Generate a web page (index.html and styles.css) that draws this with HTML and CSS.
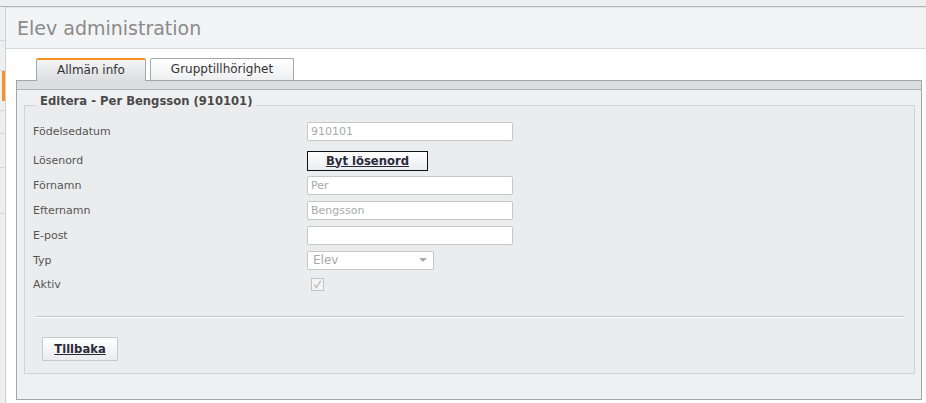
FILE: index.html
```html
<!DOCTYPE html>
<html lang="sv">
<head>
<meta charset="utf-8">
<title>Elev administration</title>
<link rel="stylesheet" href="styles.css">
</head>
<body>
<div class="topbar"></div>
<div class="layout">
  <aside class="side">
    <div class="side-item s1"></div>
    <div class="side-item s2"></div>
    <div class="side-item s3"><div class="side-mark"></div></div>
    <div class="side-item s4"></div>
    <div class="side-item s5"></div>
    <div class="side-item s6"></div>
  </aside>
  <main class="main">
    <header class="head"><h1 class="title">Elev administration</h1></header>
    <div class="content">
      <nav class="tabs">
        <a class="tab active">Allmän info</a>
        <a class="tab">Grupptillhörighet</a>
      </nav>
      <section class="panel">
        <div class="band"></div>
        <div class="panel-body">
          <fieldset class="box">
            <legend class="legend">Editera - Per Bengsson (910101)</legend>
            <div class="row"><label class="lbl">Födelsedatum</label><div class="ctl"><input class="inp" value="910101" readonly></div></div>
            <div class="row row-pw"><label class="lbl">Lösenord</label><div class="ctl"><button class="btn btn-focus" type="button">Byt lösenord</button></div></div>
            <div class="row"><label class="lbl">Förnamn</label><div class="ctl"><input class="inp" value="Per" readonly></div></div>
            <div class="row"><label class="lbl">Efternamn</label><div class="ctl"><input class="inp" value="Bengsson" readonly></div></div>
            <div class="row"><label class="lbl">E-post</label><div class="ctl"><input class="inp" value="" readonly></div></div>
            <div class="row row-s"><label class="lbl">Typ</label><div class="ctl"><div class="select"><span>Elev</span><span class="caret"></span></div></div></div>
            <div class="row row-s"><label class="lbl">Aktiv</label><div class="ctl"><span class="check"><svg width="11" height="11" viewBox="0 0 11 11"><path d="M2.2 5.6 L4.3 8.6 L8.8 1.8" fill="none" stroke="#b9b9b9" stroke-width="1.3"/></svg></span></div></div>
            <div class="sep"></div>
            <button class="btn btn-back" type="button">Tillbaka</button>
          </fieldset>
        </div>
      </section>
    </div>
  </main>
</div>
</body>
</html>
```
FILE: styles.css
```css
html, body {
  margin: 0;
  padding: 0;
  height: 100%;
}
body {
  font-family: "DejaVu Sans", Verdana, sans-serif;
  font-size: 11px;
  color: #555;
  background: #fff;
  display: flex;
  flex-direction: column;
  overflow: hidden;
}
.topbar {
  height: 6px;
  background: #eeeff1;
  border-bottom: 1px solid #b3b4b7;
  flex: none;
}
.layout {
  flex: 1;
  display: flex;
  min-height: 0;
}
.side {
  width: 5px;
  background: #eeeff1;
  border-right: 1px solid #cfd0d2;
  flex: none;
}
.side-item {
  border-bottom: 1px solid #d6d7d9;
  display: flex;
  justify-content: flex-end;
}
.s1 { height: 33px; }
.s2 { height: 29px; }
.s3 { height: 39px; }
.s4 { height: 22px; }
.s5 { height: 33px; }
.s6 { height: 45px; }
.side-mark {
  width: 3px;
  height: 30px;
  background: #f5931e;
}
.main {
  flex: 1;
  display: flex;
  flex-direction: column;
  min-width: 0;
}
.head {
  height: 40px;
  background: #f3f4f6;
  border-top: 1px solid #e3e4e6;
  border-bottom: 1px solid #d6d7d9;
  padding-left: 11px;
  flex: none;
}
.title {
  margin: 0;
  font-size: 19px;
  font-weight: normal;
  line-height: 40px;
  color: #8a8a8a;
}
.content {
  flex: 1;
  display: flex;
  flex-direction: column;
  padding: 9px 4px 3px 10px;
  min-height: 0;
}
.tabs {
  display: flex;
  gap: 4px;
  padding-left: 20px;
  height: 22px;
  flex: none;
}
.tab {
  box-sizing: border-box;
  height: 22px;
  padding: 0 20px;
  border: 1px solid #a6a7aa;
  border-bottom: none;
  border-radius: 2px 2px 0 0;
  background: linear-gradient(#ffffff, #eeeff1);
  font-size: 12px;
  line-height: 21px;
  color: #333;
  text-decoration: none;
}
.tab.active {
  height: 23px;
  margin-bottom: -1px;
  border-top: 2px solid #f5931e;
  line-height: 20px;
  background: linear-gradient(#f5f5f6, #dcdde0);
  position: relative;
  z-index: 1;
}
.panel {
  flex: 1;
  display: flex;
  flex-direction: column;
  border: 1px solid #a3a4a7;
  background: #eff0f2;
  min-height: 0;
}
.band {
  height: 8px;
  background: #dcdde0;
  border-bottom: 1px solid #b2b3b6;
  flex: none;
}
.panel-body {
  flex: 1;
  padding: 4px 6px 0 7px;
}
.box {
  margin: 0;
  border: 1px solid #d2d3d5;
  padding: 3px 8px 12px 8px;
  background: #ebecee;
}
.legend {
  font-weight: bold;
  font-size: 11.6px;
  line-height: 14px;
  color: #4a4a4a;
  padding: 0 4px 8px;
  margin-left: 3px;
}
.row {
  display: grid;
  grid-template-columns: 274px 1fr;
  align-items: center;
  height: 25px;
}
.row-pw {
  margin-top: 4px;
}
.row-s {
  height: 24px;
}
.lbl {
  color: #555;
}
.ctl {
  display: flex;
  align-items: center;
}
.inp {
  box-sizing: border-box;
  width: 206px;
  height: 19px;
  margin: 0;
  padding: 0 3px;
  border: 1px solid #c6c7c9;
  border-radius: 2px;
  background: #fff;
  font-family: "DejaVu Sans", Verdana, sans-serif;
  font-size: 11px;
  color: #a9a9a9;
  outline: none;
}
.btn {
  box-sizing: border-box;
  margin: 0;
  padding: 0;
  font-family: "DejaVu Sans", Verdana, sans-serif;
  font-size: 11.6px;
  font-weight: bold;
  text-decoration: underline;
  color: #2b2b3a;
  background: linear-gradient(#ffffff, #ebecef);
  cursor: pointer;
}
.btn-focus {
  width: 121px;
  height: 20px;
  border: 1px solid #111;
}
.select {
  box-sizing: border-box;
  width: 127px;
  height: 19px;
  border: 1px solid #c6c7c9;
  border-radius: 2px;
  background: #fff;
  display: flex;
  align-items: center;
  justify-content: space-between;
  padding: 0 6px 0 5px;
  font-size: 12px;
  color: #a9a9a9;
}
.caret {
  width: 0;
  height: 0;
  border-left: 4px solid transparent;
  border-right: 4px solid transparent;
  border-top: 4px solid #a9a9a9;
}
.check {
  box-sizing: border-box;
  width: 13px;
  height: 13px;
  margin-left: 4px;
  border: 1px solid #c2c3c5;
  background: #f4f4f5;
  display: flex;
  align-items: center;
  justify-content: center;
}
.sep {
  margin: 20px 2px 0;
  border-top: 1px solid #c6c7c9;
  border-bottom: 1px solid #ffffff;
}
.btn-back {
  display: block;
  width: 76px;
  height: 24px;
  margin: 19px 0 0 9px;
  border: 1px solid #c9cacc;
}
```
